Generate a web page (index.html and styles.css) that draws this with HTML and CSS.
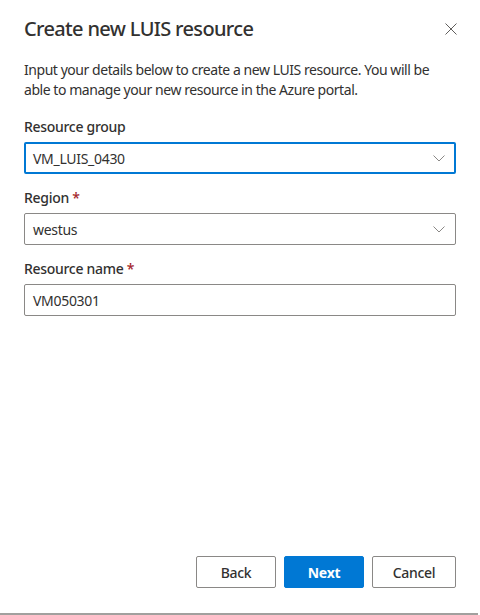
FILE: index.html
```html
<!DOCTYPE html>
<html>
<head>
<meta charset="utf-8">
<link rel="stylesheet" href="styles.css">
</head>
<body>
<div class="dialog">
  <div class="header">
    <h1 class="title">Create new LUIS resource</h1>
    <button class="close" aria-label="Close">
      <svg width="12" height="12" viewBox="0 0 12 12"><path d="M0.5 0.5 L11.5 11.5 M11.5 0.5 L0.5 11.5" stroke="#605e5c" stroke-width="1" fill="none"/></svg>
    </button>
  </div>
  <p class="desc">Input your details below to create a new LUIS resource. You will be able to manage your new resource in the Azure portal.</p>
  <div class="field">
    <label class="label">Resource group</label>
    <div class="select focused">
      <span>VM_LUIS_0430</span>
      <svg class="chev" width="12" height="7" viewBox="0 0 12 7"><path d="M0.5 0.5 L6 6 L11.5 0.5" stroke="#8a8886" stroke-width="1" fill="none"/></svg>
    </div>
  </div>
  <div class="field">
    <label class="label">Region <span class="req">*</span></label>
    <div class="select">
      <span>westus</span>
      <svg class="chev" width="12" height="7" viewBox="0 0 12 7"><path d="M0.5 0.5 L6 6 L11.5 0.5" stroke="#8a8886" stroke-width="1" fill="none"/></svg>
    </div>
  </div>
  <div class="field">
    <label class="label">Resource name <span class="req">*</span></label>
    <div class="input"><span>VM050301</span></div>
  </div>
  <div class="spacer"></div>
  <div class="footer">
    <button class="btn">Back</button>
    <button class="btn primary">Next</button>
    <button class="btn">Cancel</button>
  </div>
  <div class="bottom-line"></div>
</div>
</body>
</html>
```
FILE: styles.css
```css
* { box-sizing: border-box; }
html, body { margin: 0; padding: 0; background: #fff; }
body {
  width: 480px;
  height: 615px;
  font-family: "Noto Sans", "Open Sans", sans-serif;
  color: #323130;
}
.dialog {
  height: 615px;
  display: flex;
  flex-direction: column;
}
.header {
  display: flex;
  align-items: center;
  justify-content: space-between;
  padding: 14px 24px 0 24px;
}
.title {
  margin: 0;
  font-size: 20px;
  font-weight: 500;
  line-height: 30px;
  color: #323130;
  letter-spacing: -0.65px;
}
.close {
  border: 0;
  background: none;
  padding: 0;
  width: 12px;
  height: 12px;
  margin-right: -1px;
  display: flex;
}
.desc {
  margin: 16px 24px 0 24px;
  font-size: 14px;
  line-height: 20px;
  letter-spacing: -0.45px;
}
.field {
  margin: 12px 24px 0 24px;
  display: flex;
  flex-direction: column;
}
.field + .field { margin-top: 9px; }
.label {
  font-size: 14px;
  font-weight: 500;
  line-height: 20px;
  padding: 5px 0;
  letter-spacing: -0.3px;
}
.req { color: #a4262c; }
.select, .input {
  height: 32px;
  border: 1px solid #8a8886;
  border-radius: 2px;
  display: flex;
  align-items: center;
  justify-content: space-between;
  padding: 0 8px;
  font-size: 14px;
  letter-spacing: -0.3px;
}
.select.focused {
  border: 2px solid #0078d4;
  padding: 0 7px;
}
.chev { margin-right: 2px; }
.spacer { flex: 1; }
.footer {
  display: flex;
  justify-content: flex-end;
  gap: 8px;
  padding: 0 24px 25px 24px;
}
.btn {
  height: 32px;
  min-width: 80px;
  padding: 0 16px;
  border: 1px solid #8a8886;
  border-radius: 2px;
  background: #fff;
  color: #323130;
  font-family: inherit;
  font-size: 14px;
  font-weight: 500;
  letter-spacing: -0.3px;
}
.btn.primary {
  background: #0078d4;
  border-color: #0078d4;
  color: #fff;
  font-weight: 700;
}
.btn:last-child { min-width: 84px; }
.bottom-line {
  height: 2px;
  width: 478px;
  background: #8a8886;
  opacity: 0.8;
}
```
